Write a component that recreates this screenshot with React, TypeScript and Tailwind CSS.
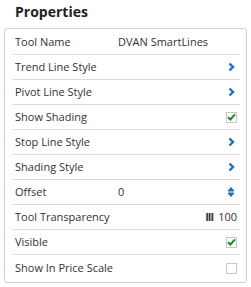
import React from "react";

type Row = {
  label: string;
  kind: "text" | "link" | "check" | "stepper" | "slider";
  value?: string;
  checked?: boolean;
};

const rows: Row[] = [
  { label: "Tool Name", kind: "text", value: "DVAN SmartLines" },
  { label: "Trend Line Style", kind: "link" },
  { label: "Pivot Line Style", kind: "link" },
  { label: "Show Shading", kind: "check", checked: true },
  { label: "Stop Line Style", kind: "link" },
  { label: "Shading Style", kind: "link" },
  { label: "Offset", kind: "stepper", value: "0" },
  { label: "Tool Transparency", kind: "slider", value: "100" },
  { label: "Visible", kind: "check", checked: true },
  { label: "Show In Price Scale", kind: "check", checked: false },
];

function Chevron() {
  return (
    <svg width="7" height="10" viewBox="0 0 7 10" className="mr-[2px] text-[#1b6fc2]">
      <path d="M1.5 1.5 L5 5 L1.5 8.5" fill="none" stroke="currentColor" strokeWidth="2.4" />
    </svg>
  );
}

function Stepper() {
  return (
    <svg width="8" height="12" viewBox="0 0 8 12" className="mr-[2px] text-[#1b6fc2]">
      <path d="M1 5 L4 1.5 L7 5 Z M1 7 L4 10.5 L7 7 Z" fill="currentColor" stroke="currentColor" strokeWidth="1" strokeLinejoin="round" />
    </svg>
  );
}

function Check({ checked }: { checked?: boolean }) {
  return (
    <span className="flex h-[11px] w-[11px] items-center justify-center border border-[#c8c8c8] bg-white">
      {checked && (
        <svg width="9" height="8" viewBox="0 0 9 8">
          <path d="M1 4.2 L3.4 6.5 L8 1.3" fill="none" stroke="#1e8a1e" strokeWidth="2" />
        </svg>
      )}
    </span>
  );
}

function PropertyRow({ row, last }: { row: Row; last: boolean }) {
  return (
    <div
      className={`flex items-center whitespace-nowrap pl-[2px] pr-[3px] ${
        last ? "h-[27px]" : "h-[25px] border-b border-[#dcdcdc]"
      }`}
    >
      <span className="w-[103px] shrink-0 text-[#333]">{row.label}</span>
      <span className="flex-1 text-[#333]">
        {(row.kind === "text" || row.kind === "stepper") && row.value}
      </span>
      {row.kind === "link" && <Chevron />}
      {row.kind === "stepper" && <Stepper />}
      {row.kind === "check" && <Check checked={row.checked} />}
      {row.kind === "slider" && (
        <span className="flex items-center gap-[5px] text-[#333]">
          <span className="font-bold tracking-[-1px]">III</span>
          <span>{row.value}</span>
        </span>
      )}
    </div>
  );
}

export default function App() {
  return (
    <div className="h-[287px] w-[251px] bg-white font-['Open_Sans',sans-serif] text-[11px]">
      <h1 className="pl-[15px] pt-[1px] text-[14px] leading-[22px] font-bold text-[#222]">
        Properties
      </h1>
      <div className="mx-[4px] mt-[5px] rounded-[3px] border border-[#cfcfcf] pl-[8px] pr-[6px] pt-[1px]">
        {rows.map((row, i) => (
          <PropertyRow key={row.label} row={row} last={i === rows.length - 1} />
        ))}
      </div>
    </div>
  );
}
